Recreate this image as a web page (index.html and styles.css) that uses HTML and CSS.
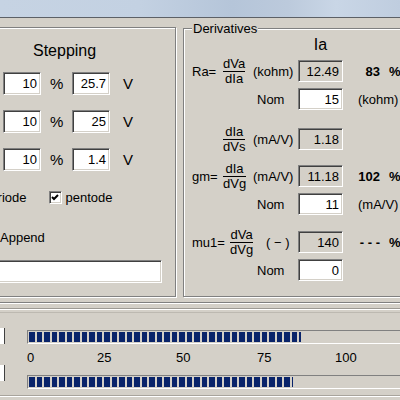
FILE: index.html
```html
<!DOCTYPE html>
<html lang="en">
<head>
  <meta charset="UTF-8">
  <title>Tube curve tracer</title>
  <link rel="stylesheet" href="styles.css">
</head>
<body>
  <div class="backdrop"></div>
  <div class="dialog">
    <div class="groups">
      <div class="group stepping">
        <div class="title">Stepping</div>
        <div class="step-row">
          <span class="edit">10</span><span class="pct">%</span><span class="edit">25.7</span><span class="volt">V</span>
        </div>
        <div class="step-row">
          <span class="edit">10</span><span class="pct">%</span><span class="edit">25</span><span class="volt">V</span>
        </div>
        <div class="step-row">
          <span class="edit">10</span><span class="pct">%</span><span class="edit">1.4</span><span class="volt">V</span>
        </div>
        <div class="mode-row">
          <label class="check-label"><span class="check"></span>triode</label>
          <label class="check-label second"><span class="check"><svg width="9" height="9" viewBox="0 0 9 9"><path d="M1 4l2 2 4-4" stroke="#000" stroke-width="2" fill="none"/></svg></span>pentode</label>
        </div>
        <label class="check-label append"><span class="check"></span>Append</label>
        <div class="edit wide"></div>
      </div>

      <fieldset class="group derivatives">
        <legend>Derivatives</legend>
        <div class="drow head"><span class="col-head">Ia</span></div>

        <div class="drow first">
          <span class="name">Ra=</span>
          <span class="frac"><span>dVa</span><span>dIa</span></span>
          <span class="dim">(kohm)</span>
          <span class="edit ro">12.49</span>
          <span class="ratio"><b class="val">83</b><b>%</b></span>
        </div>
        <div class="drow nom">
          <span class="nom-label">Nom</span>
          <span class="edit">15</span>
          <span class="nom-unit">(kohm)</span>
        </div>

        <div class="drow calc">
          <span class="frac"><span>dIa</span><span>dVs</span></span>
          <span class="dim">(mA/V)</span>
          <span class="edit ro">1.18</span>
        </div>

        <div class="drow calc">
          <span class="name">gm=</span>
          <span class="frac"><span>dIa</span><span>dVg</span></span>
          <span class="dim">(mA/V)</span>
          <span class="edit ro">11.18</span>
          <span class="ratio"><b class="val">102</b><b>%</b></span>
        </div>
        <div class="drow nom">
          <span class="nom-label">Nom</span>
          <span class="edit">11</span>
          <span class="nom-unit">(mA/V)</span>
        </div>

        <div class="drow calc mu">
          <span class="name">mu1=</span>
          <span class="frac"><span>dVa</span><span>dVg</span></span>
          <span class="dim">(&nbsp;&minus;&nbsp;)</span>
          <span class="edit ro">140</span>
          <span class="ratio"><b class="val">- - -</b><b>%</b></span>
        </div>
        <div class="drow nom">
          <span class="nom-label">Nom</span>
          <span class="edit">0</span>
        </div>
      </fieldset>
    </div>

    <div class="sep"></div>

    <div class="meters">
      <span class="side top"></span>
      <div class="bar"><div class="fill" style="width: 272px"></div></div>
      <div class="scale">
        <span>0</span><span>25</span><span>50</span><span>75</span><span>100</span>
      </div>
      <span class="side low"></span>
      <div class="bar"><div class="fill" style="width: 264px"></div></div>
    </div>
  </div>
</body>
</html>
```

FILE: styles.css
```css
* {
  box-sizing: border-box;
}
body {
  margin: 0;
  width: 400px;
  height: 400px;
  overflow: hidden;
  font-family: "Liberation Sans", Arial, sans-serif;
  font-size: 13px;
  color: #000;
  background: #d4d0c8;
}
.backdrop {
  height: 18px;
  background: linear-gradient(90deg, #c6d3e3 0%, #c3d1e2 35%, #b5c5d9 58%, #bccadc 72%, #c9d6e6 84%, #bfcddf 100%);
  border-bottom: 1px solid #5c6066;
}
.dialog {
  background: #d4d0c8;
}
.groups {
  display: flex;
  align-items: stretch;
  height: 279px;
  padding-top: 9px;
}
.group {
  border: 1px solid #808080;
  box-shadow: inset 1px 1px 0 #fff, 1px 1px 0 #fff;
}

/* sunken edit box */
.edit {
  display: flex;
  align-items: center;
  justify-content: flex-end;
  width: 38px;
  height: 23px;
  padding-right: 3px;
  background: #fff;
  border: 1px solid;
  border-color: #808080 #fff #fff #808080;
  box-shadow: inset 1px 1px 0 #404040, inset -1px -1px 0 #d4d0c8;
}
.edit.ro {
  background: #d4d0c8;
}
.check {
  display: flex;
  align-items: center;
  justify-content: center;
  width: 13px;
  height: 13px;
  background: #fff;
  border: 1px solid;
  border-color: #808080 #fff #fff #808080;
  box-shadow: inset 1px 1px 0 #404040, inset -1px -1px 0 #d4d0c8;
}

/* stepping */
.stepping {
  flex: none;
  width: 206px;
  margin-left: -30px;
  padding: 14px 0 0 6px;
  display: flex;
  flex-direction: column;
  align-items: flex-start;
}
.title {
  font-size: 16px;
  line-height: 18px;
  margin-left: 56px;
}
.step-row {
  display: flex;
  align-items: center;
  margin: 12px 0 0 26px;
  font-size: 15px;
}
.step-row + .step-row {
  margin-top: 15px;
}
.step-row .edit {
  font-size: 13px;
}
.pct {
  width: 31px;
  padding-left: 9px;
}
.volt {
  margin-left: 13px;
}
.mode-row {
  display: flex;
  align-items: center;
  height: 15px;
  margin-top: 19px;
}
.check-label {
  display: flex;
  align-items: center;
  gap: 4px;
  line-height: 15px;
}
.check-label.second {
  margin-left: 22px;
}
.append {
  margin-top: 25px;
  gap: 5px;
  padding-left: 5px;
}
.edit.wide {
  width: 185px;
  margin-top: 15px;
}

/* derivatives */
.derivatives {
  flex: none;
  width: 260px;
  min-width: 0;
  margin: -6px 0 0 7px;
  padding: 0 0 0 8px;
}
.derivatives legend {
  padding: 0 1px;
  line-height: 15px;
  background: #d4d0c8;
}
.drow {
  display: grid;
  grid-template-columns: 31px 30px 45px 45px 1fr;
  align-items: center;
  height: 22px;
}
.drow.head {
  height: 18px;
}
.col-head {
  grid-column: 4;
  font-size: 16px;
  line-height: 18px;
  text-align: center;
}
.drow.first {
  margin-top: 3px;
}
.drow.nom {
  margin-top: 9px;
}
.drow.calc {
  margin-top: 15px;
}
.drow.mu {
  margin-top: 13px;
}
.drow .edit {
  grid-column: 4;
  width: 45px;
  height: 22px;
}
.name {
  grid-column: 1;
}
.frac {
  grid-column: 2;
  justify-self: start;
  display: flex;
  flex-direction: column;
  text-align: center;
}
.frac span:first-child {
  line-height: 14px;
  border-bottom: 1px solid #000;
}
.frac span:last-child {
  line-height: 13px;
}
.dim {
  grid-column: 3;
}
.mu .frac {
  margin-left: 7px;
}
.mu .dim {
  margin-left: 13px;
}
.nom-label {
  grid-column: 1 / 4;
  padding-left: 65px;
}
.nom-unit {
  grid-column: 5;
  padding-left: 15px;
}
.ratio {
  grid-column: 5;
  display: flex;
}
.ratio .val {
  width: 37px;
  text-align: right;
  white-space: nowrap;
}
.ratio b + b {
  margin-left: 9px;
}

/* separator under the groups */
.sep {
  height: 11px;
  margin-top: 5px;
  border-top: 1px solid #808080;
  border-bottom: 1px solid #bdb9b1;
  box-shadow: inset 0 1px 0 #fff;
}
.sep::after {
  content: "";
  display: block;
  height: 5px;
  border-bottom: 1px solid #9d9a94;
  box-shadow: 0 1px 0 #fff;
}

/* meters */
.meters {
  width: 440px;
  margin-left: -20px;
  padding-top: 17px;
  display: grid;
  grid-template-columns: 25px 1fr;
  column-gap: 22px;
}
.side {
  grid-column: 1;
  height: 16px;
  background: #fff;
  border-right: 1px solid #404040;
}
.side.top {
  margin-top: -2px;
}
.side.low {
  margin-top: -10px;
}
.bar {
  grid-column: 2;
  height: 14px;
  padding: 1px;
  border: 1px solid;
  border-color: #808080 #fff #fff #808080;
}
.fill {
  height: 100%;
  background: repeating-linear-gradient(90deg, #0a246a 0 6px, transparent 6px 8px, #0a246a 8px 13px, transparent 13px 15px);
}
.scale {
  grid-column: 2;
  display: grid;
  grid-template-columns: 70px 79px 81px 78px auto;
  line-height: 15px;
  margin: 6px 0 10px;
}
.meters::after {
  content: "";
  grid-column: 1 / 3;
  height: 6px;
  border-bottom: 1px solid #a8a49c;
  box-shadow: 0 1px 0 #fff;
}
```
